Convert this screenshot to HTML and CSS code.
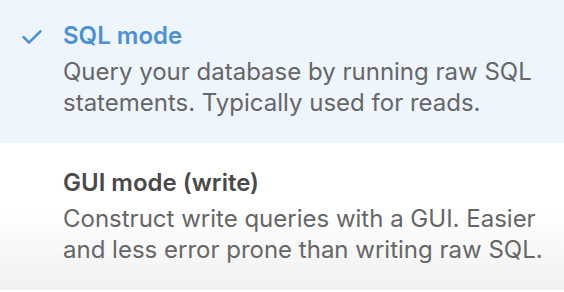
FILE: index.html
```html
<!DOCTYPE html>
<html>
<head>
<meta charset="utf-8">
<link rel="stylesheet" href="styles.css">
</head>
<body>
<div class="menu">
  <div class="item selected">
    <div class="mark">
      <svg width="20" height="15" viewBox="0 0 20 15"><path d="M1.6 7.2 L7 12.6 L18.4 1.4" fill="none" stroke="#4a90d9" stroke-width="2.6" stroke-linecap="round" stroke-linejoin="round"/></svg>
    </div>
    <div class="body">
      <div class="title">SQL mode</div>
      <div class="desc">Query your database by running raw SQL statements. Typically used for reads.</div>
    </div>
  </div>
  <div class="item">
    <div class="mark"></div>
    <div class="body">
      <div class="title">GUI mode (write)</div>
      <div class="desc">Construct write queries with a GUI. Easier and less error prone than writing raw SQL.</div>
    </div>
  </div>
</div>
</body>
</html>
```
FILE: styles.css
```css
html, body {
  margin: 0;
  padding: 0;
  background: #ffffff;
}
body {
  font-family: Inter, "Noto Sans", sans-serif;
  width: 564px;
  height: 292px;
  overflow: hidden;
}
.menu {
  margin-top: -4px;
  display: flex;
  flex-direction: column;
}
.item {
  display: flex;
  padding: 24px 16px 25px 22px;
  height: 98px;
}
.item.selected {
  background: #eef5fd;
}
.item:not(.selected) {
  background: linear-gradient(to bottom, #ffffff 45%, #f1f1f1 100%);
}
.mark {
  width: 20px;
  flex: none;
  margin-right: 21px;
  padding-top: 9px;
}
.body {
  flex: 1;
}
.title {
  font-size: 24px;
  line-height: 31px;
  font-weight: 600;
  color: #4a4a4a;
  margin-bottom: 5px;
}
.selected .title {
  color: #4a90d9;
}
.desc {
  font-size: 24px;
  line-height: 31px;
  color: #666666;
}
```
